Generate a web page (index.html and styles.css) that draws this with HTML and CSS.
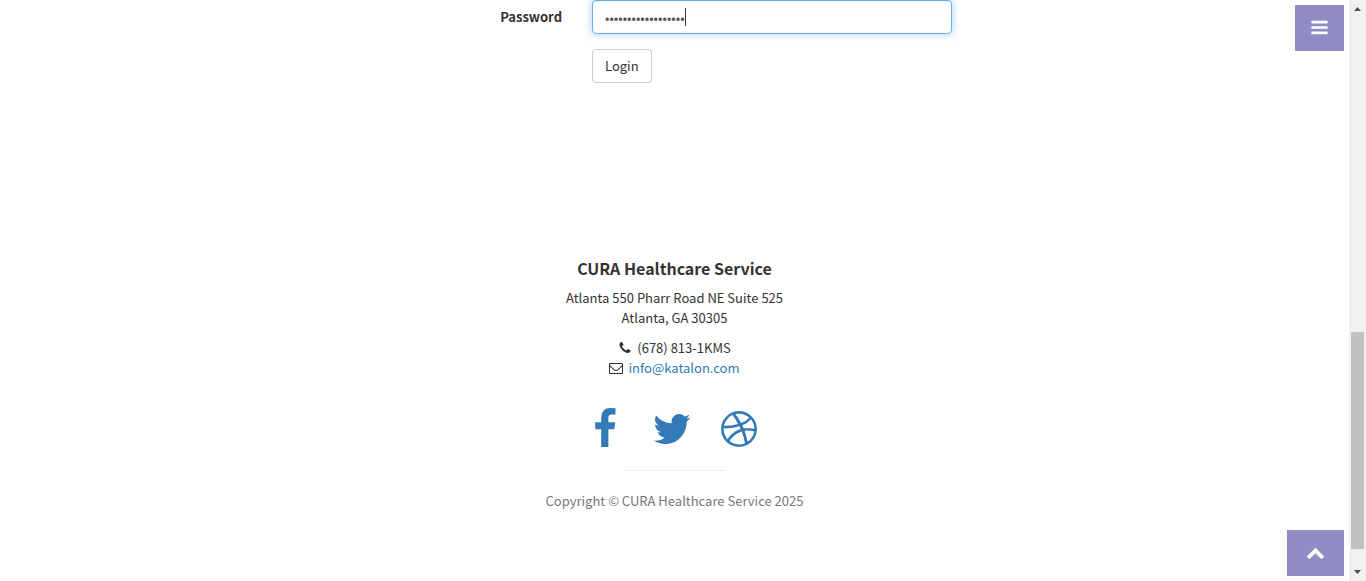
FILE: index.html
```html
<!DOCTYPE html>
<html lang="en">
<head>
<meta charset="utf-8">
<title>CURA Healthcare Service</title>
<link rel="stylesheet" href="styles.css">
</head>
<body>
<div class="page">
  <main class="login">
    <form class="login-form">
      <label class="login-label" for="password">Password</label>
      <div class="password-field">
        <input class="form-control" id="password" type="password" value="ThisIsNotAPassword">
        <span class="caret"></span>
      </div>
      <button class="btn-login" type="button">Login</button>
    </form>
  </main>
  <footer class="footer">
    <h4 class="footer-title">CURA Healthcare Service</h4>
    <p class="footer-text">Atlanta 550 Pharr Road NE Suite 525<br>Atlanta, GA 30305</p>
    <ul class="contact">
      <li class="contact-item">
        <svg class="icon" viewBox="0 0 1792 1792" aria-hidden="true"><path d="M1600 1240q0 27-10 70.500t-21 68.500q-21 50-122 106-94 51-186 51-27 0-52.500-3.500t-57.500-12.500-47.500-14.500-55.500-20.500-49-18q-98-35-175-83-128-79-264.500-215.500t-215.500-264.500q-48-77-83-175-3-9-18-49t-20.500-55.500-14.500-47.500-12.500-57.500-3.500-52.500q0-92 51-186 56-101 106-122 25-11 68.500-21t70.500-10q14 0 21 3 18 6 53 76 11 19 30 54t35 63.500 31 53.500q3 4 17.500 25t21.500 35.500 7 28.500q0 20-28.500 50t-62 55-62 53-28.500 46q0 9 5 22.500t8.500 20.500 14 24 11.500 19q76 137 174 235t235 174q2 1 19 11.500t24 14 20.500 8.500 22.500 5q18 0 46-28.500t53-62 55-62 50-28.500q14 0 28.500 7t35.500 21.500 25 17.500q25 15 53.500 31t63.500 35 54 30q70 35 76 53 3 7 3 21z"/></svg>
        <span>(678) 813-1KMS</span>
      </li>
      <li class="contact-item">
        <svg class="icon" viewBox="0 0 1792 1792" aria-hidden="true"><path d="M1664 1504v-768q-32 36-69 66-268 206-426 338-51 43-83 67t-86.500 48.500-102.500 24.500h-2q-48 0-102.500-24.500t-86.500-48.500-83-67q-158-132-426-338-37-30-69-66v768q0 13 9.500 22.500t22.500 9.500h1472q13 0 22.500-9.500t9.500-22.500zm0-1051v-24.500l-.5-13-3-12.500-5.500-9-9-7.500-14-2.500h-1472q-13 0-22.500 9.500t-9.500 22.500q0 168 147 284 193 152 401 317 6 5 35 29.500t46 37.500 44.500 31.500 50.500 27.500 43 9h2q20 0 43-9t50.500-27.500 44.500-31.500 46-37.500 35-29.500q208-165 401-317 54-43 100.500-115.500t46.500-131.500zm128-37v1088q0 66-47 113t-113 47h-1472q-66 0-113-47t-47-113v-1088q0-66 47-113t113-47h1472q66 0 113 47t47 113z"/></svg>
        <a href="mailto:info@katalon.com">info@katalon.com</a>
      </li>
    </ul>
    <ul class="social">
      <li><a href="#" aria-label="Facebook"><svg class="icon-large" viewBox="0 0 1792 1792"><path d="M1343 12v264h-157q-86 0-116 36t-30 108v189h293l-39 296h-254v759h-306v-759h-255v-296h255v-218q0-186 104-288.500t277-102.500q147 0 228 12z"/></svg></a></li>
      <li><a href="#" aria-label="Twitter"><svg class="icon-large" viewBox="0 0 1792 1792"><path d="M1684 408q-67 98-162 167 1 14 1 42 0 130-38 259.500t-115.500 248.500-184.500 210.500-258 146-323 54.500q-271 0-496-145 35 4 78 4 225 0 401-138-105-2-188-64.500t-114-159.500q33 5 61 5 43 0 85-11-112-23-185.500-111.500t-73.500-205.500v-4q68 38 146 41-66-44-105-115t-39-154q0-88 44-163 121 149 294.500 238.500t371.500 99.500q-8-38-8-74 0-134 94.500-228.500t228.500-94.500q140 0 236 102 109-21 205-78-37 115-142 178 93-10 186-50z"/></svg></a></li>
      <li><a href="#" aria-label="Dribbble"><svg class="icon-large" viewBox="0 0 1792 1792"><path d="M1152 1500q-42-241-140-498h-2l-2 1q-16 6-43 16.500t-101 49-137 82-131 114.500-103 148l-15-11q184 150 418 150 132 0 256-52zm-185-607q-21-49-53-111-311 93-673 93-1 7-1 21 0 124 44 236.500t124 201.500q50-89 123.500-166.500t142.500-124.500 130.500-81 99.500-48l37-13q4-1 13-3.500t13-4.500zm-107-212q-120-213-244-378-138 65-234 186t-128 272q302 0 606-80zm684 319q-210-60-409-29 87 239 128 469 111-75 185-189.500t96-250.500zm-805-741q-1 0-2 1 1-1 2-1zm590 145q-185-164-433-164-76 0-155 19 131 170 246 382 69-26 130-60.500t96.500-61.500 65.500-57 37.500-40.500zm223 485q-3-232-149-410l-1 1q-9 12-19 24.500t-43.500 44.500-71 60.500-100 65-131.500 64.500q25 53 44 95 2 5 6.500 17t7.500 17q36-5 74.500-7t73.500-2 69 1.500 64 4 56.500 5.500 48 6.500 36.500 6 25 4.500zm112 7q0 209-103 385.500t-279.500 279.500-385.500 103-385.500-103-279.500-279.500-103-385.500 103-385.500 279.500-279.500 385.500-103 385.500 103 279.500 279.500 103 385.500z"/></svg></a></li>
    </ul>
    <hr class="divider">
    <p class="copyright">Copyright © CURA Healthcare Service 2025</p>
  </footer>
</div>
<button class="float-btn menu-toggle" type="button" aria-label="Menu"><svg class="float-icon" viewBox="0 0 1792 1792"><path d="M1664 1344v128q0 64-64 64h-1408q-64 0-64-64v-128q0-64 64-64h1408q64 0 64 64zm0-512v128q0 64-64 64h-1408q-64 0-64-64v-128q0-64 64-64h1408q64 0 64 64zm0-512v128q0 64-64 64h-1408q-64 0-64-64v-128q0-64 64-64h1408q64 0 64 64z"/></svg></button>
<button class="float-btn to-top" type="button" aria-label="Back to top"><svg class="float-icon" viewBox="0 0 1792 1792"><path d="M1683 1331l-166 165q-19 19-45 19t-45-19l-531-531-531 531q-19 19-45 19t-45-19l-166-165q-19-19-19-45.500t19-45.500l742-741q19-19 45-19t45 19l742 741q19 19 19 45.500t-19 45.500z"/></svg></button>
<div class="scrollbar" aria-hidden="true">
  <svg class="scroll-arrow" viewBox="0 0 17 17"><path d="M5 11h7l-3.500-4z"/></svg>
  <div class="scroll-track"><div class="scroll-thumb"></div></div>
  <svg class="scroll-arrow" viewBox="0 0 17 17"><path d="M5 6h7l-3.500 4z"/></svg>
</div>
</body>
</html>
```
FILE: styles.css
```css
* {
  box-sizing: border-box;
}

body {
  margin: 0;
  background: #fff;
  color: #333;
  font-family: "Noto Sans CJK JP", "Noto Sans CJK SC", sans-serif;
  font-size: 13px;
  line-height: 20px;
}

a {
  color: #337ab7;
  text-decoration: none;
}

.page {
  padding-right: 17px;
}

.login-form {
  display: grid;
  grid-template-columns: 1fr 360px 1fr;
  column-gap: 30px;
  row-gap: 15px;
  padding-left: 195px;
}

.login-label {
  padding-top: 7px;
  font-weight: 700;
  text-align: right;
}

.password-field {
  position: relative;
}

.form-control {
  display: block;
  width: 100%;
  height: 34px;
  padding: 6px 12px;
  border: 1px solid #66afe9;
  border-radius: 4px;
  outline: 0;
  background: #fff;
  box-shadow: inset 0 1px 1px rgba(0, 0, 0, .075), 0 0 8px rgba(102, 175, 233, .6);
  color: #555;
  font: inherit;
}

.caret {
  position: absolute;
  top: 8px;
  left: 93px;
  width: 1px;
  height: 18px;
  background: #333;
}

.btn-login {
  grid-column: 2;
  justify-self: start;
  height: 34px;
  padding: 6px 12px;
  border: 1px solid #ccc;
  border-radius: 4px;
  background: #fff;
  color: #333;
  font: inherit;
}

.footer {
  padding: 175px 15px 70px;
  text-align: center;
}

.footer-title {
  margin: 0 0 10px;
  font-size: 16px;
  font-weight: 700;
  line-height: 20px;
}

.footer-text {
  margin: 0 0 10px;
}

.contact,
.social {
  margin: 0;
  padding: 0;
  list-style: none;
}

.contact-item {
  display: flex;
  align-items: center;
  justify-content: center;
  gap: 5px;
}

.icon {
  width: 14px;
  height: 14px;
  fill: currentColor;
}

.social {
  display: flex;
  justify-content: center;
  gap: 25px;
  padding: 30px 5px 0 0;
}

.icon-large {
  display: block;
  width: 42px;
  height: 42px;
  fill: currentColor;
}

.divider {
  width: 100px;
  margin: 20px auto;
  border: 0;
  border-top: 1px solid #eee;
}

.copyright {
  margin: 0;
  color: #777;
}

.float-btn {
  position: fixed;
  right: 22px;
  display: flex;
  align-items: center;
  justify-content: center;
  height: 46px;
  padding: 0 0 1px;
  border: 0;
  background: #918dc4;
  color: #fff;
}

.menu-toggle {
  top: 5px;
  width: 49px;
}

.to-top {
  bottom: 5px;
  width: 57px;
}

.float-icon {
  width: 19px;
  height: 19px;
  fill: currentColor;
}

.scrollbar {
  position: fixed;
  top: 0;
  right: 0;
  bottom: 0;
  display: flex;
  flex-direction: column;
  width: 17px;
  background: #f1f1f1;
}

.scroll-arrow {
  width: 17px;
  height: 17px;
  fill: #505050;
}

.scroll-track {
  display: flex;
  flex: 1;
  flex-direction: column;
  justify-content: flex-end;
  padding: 0 2px 15px;
}

.scroll-thumb {
  height: 40.8%;
  background: #c1c1c1;
}
```
